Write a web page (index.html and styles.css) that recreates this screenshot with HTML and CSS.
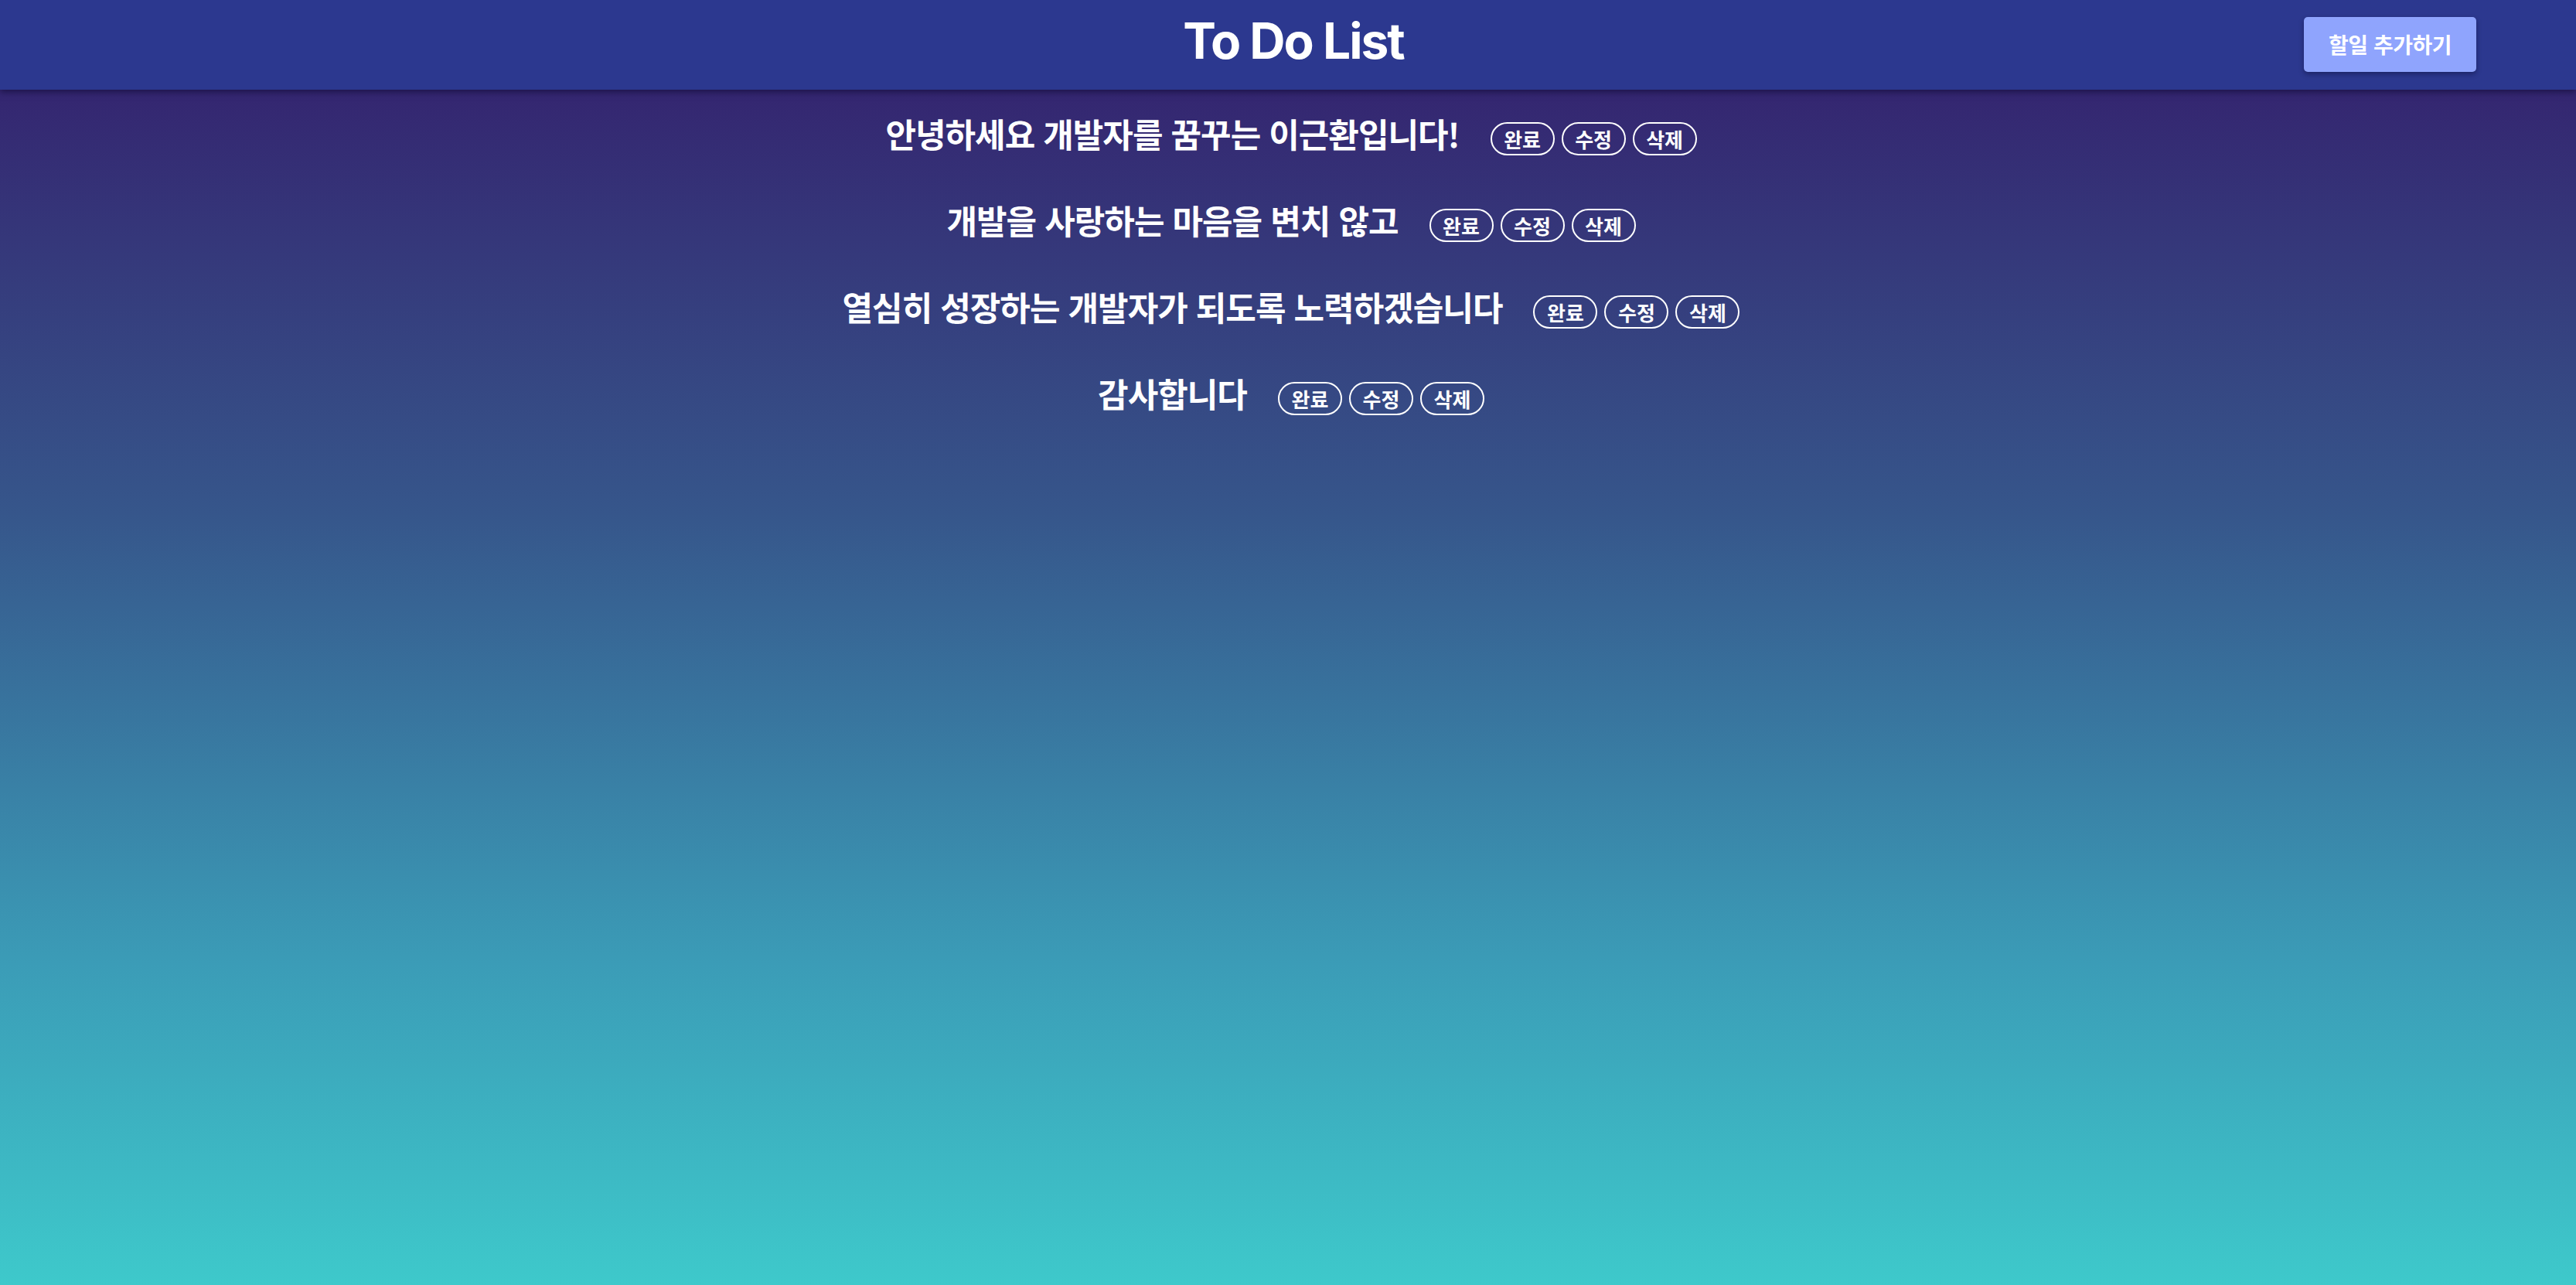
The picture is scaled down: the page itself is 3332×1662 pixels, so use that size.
FILE: index.html
```html
<!DOCTYPE html>
<html lang="ko">
<head>
<meta charset="utf-8">
<title>To Do List</title>
<link rel="stylesheet" href="styles.css">
</head>
<body>
<header class="app-header">
  <div class="header-spacer"></div>
  <h1 class="app-title">To Do List</h1>
  <div class="header-actions">
    <button class="add-button">할일 추가하기</button>
  </div>
</header>
<main class="todo-main">
  <ul class="todo-list">
    <li class="todo-item">
      <span class="todo-text">안녕하세요 개발자를 꿈꾸는 이근환입니다!</span>
      <div class="todo-actions">
        <button class="pill">완료</button>
        <button class="pill">수정</button>
        <button class="pill">삭제</button>
      </div>
    </li>
    <li class="todo-item">
      <span class="todo-text">개발을 사랑하는 마음을 변치 않고</span>
      <div class="todo-actions">
        <button class="pill">완료</button>
        <button class="pill">수정</button>
        <button class="pill">삭제</button>
      </div>
    </li>
    <li class="todo-item">
      <span class="todo-text">열심히 성장하는 개발자가 되도록 노력하겠습니다</span>
      <div class="todo-actions">
        <button class="pill">완료</button>
        <button class="pill">수정</button>
        <button class="pill">삭제</button>
      </div>
    </li>
    <li class="todo-item">
      <span class="todo-text">감사합니다</span>
      <div class="todo-actions">
        <button class="pill">완료</button>
        <button class="pill">수정</button>
        <button class="pill">삭제</button>
      </div>
    </li>
  </ul>
</main>
</body>
</html>
```

FILE: styles.css
```css
html, body {
  margin: 0;
  padding: 0;
}

body {
  min-height: 100vh;
  background: linear-gradient(180deg, #341c6b 0%, #36568b 40%, #3b9cb7 75%, #3ec9cb 100%);
  font-family: "Noto Sans CJK KR", "Noto Sans", sans-serif;
  color: #ffffff;
}

.app-header {
  height: 116px;
  background: #2c388f;
  display: grid;
  grid-template-columns: 1fr auto 1fr;
  align-items: center;
  box-shadow: 0 3px 8px rgba(10, 5, 40, 0.55);
  position: relative;
  z-index: 1;
}

.app-title {
  margin: 0;
  font-family: Inter, "Noto Sans CJK KR", sans-serif;
  font-weight: 700;
  font-size: 64px;
  letter-spacing: -2px;
  line-height: 1;
  padding-left: 14px;
  padding-bottom: 10px;
  color: #ffffff;
}

.header-actions {
  display: flex;
  justify-content: flex-end;
  padding-right: 129px;
}

.add-button {
  width: 223px;
  height: 71px;
  margin-top: -2px;
  border: none;
  border-radius: 5px;
  background: #8fa4fd;
  color: #ffffff;
  font-family: "Noto Sans CJK KR", sans-serif;
  font-weight: 700;
  font-size: 28px;
  letter-spacing: -0.5px;
  box-shadow: 0 3px 6px rgba(10, 10, 50, 0.45);
  cursor: pointer;
}

.todo-main {
  padding-top: 27px;
  padding-left: 8px;
}

.todo-list {
  list-style: none;
  margin: 0;
  padding: 0;
  display: flex;
  flex-direction: column;
  gap: 54px;
}

.todo-item {
  display: flex;
  justify-content: center;
  align-items: baseline;
  gap: 40px;
  height: 58px;
}

.todo-text {
  font-size: 43px;
  font-weight: 700;
  line-height: 58px;
  letter-spacing: -1px;
}

.todo-actions {
  display: flex;
  align-items: baseline;
  gap: 9px;
}

.pill {
  height: 43px;
  width: 83px;
  padding: 0;
  border: 2px solid #ffffff;
  border-radius: 22px;
  background: transparent;
  color: #ffffff;
  font-family: "Noto Sans CJK KR", sans-serif;
  font-weight: 700;
  font-size: 26px;
  line-height: 37px;
  letter-spacing: 0;
  text-align: center;
  cursor: pointer;
}
```
